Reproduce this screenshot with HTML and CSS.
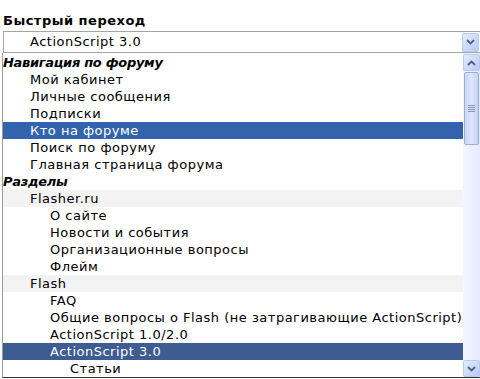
FILE: index.html
```html
<!DOCTYPE html>
<html>
<head>
<meta charset="utf-8">
<link rel="stylesheet" href="styles.css">
</head>
<body>
<div class="page">
  <div class="title">Быстрый переход</div>
  <div class="select">
    <span class="select-text">ActionScript 3.0</span>
    <span class="btn btn-down"><svg width="9" height="6" viewBox="0 0 9 6"><path d="M1 1 L4.5 4.5 L8 1" fill="none" stroke="#4d6185" stroke-width="1.8"/></svg></span>
  </div>
  <div class="list">
    <div class="options">
      <div class="opt cat">Навигация по форуму</div>
      <div class="opt l1">Мой кабинет</div>
      <div class="opt l1">Личные сообщения</div>
      <div class="opt l1">Подписки</div>
      <div class="opt l1 hl">Кто на форуме</div>
      <div class="opt l1">Поиск по форуму</div>
      <div class="opt l1">Главная страница форума</div>
      <div class="opt cat">Разделы</div>
      <div class="opt l1 grey">Flasher.ru</div>
      <div class="opt l2">О сайте</div>
      <div class="opt l2">Новости и события</div>
      <div class="opt l2">Организационные вопросы</div>
      <div class="opt l2">Флейм</div>
      <div class="opt l1 grey">Flash</div>
      <div class="opt l2">FAQ</div>
      <div class="opt l2">Общие вопросы о Flash (не затрагивающие ActionScript)</div>
      <div class="opt l2">ActionScript 1.0/2.0</div>
      <div class="opt l2 sel">ActionScript 3.0</div>
      <div class="opt l3">Статьи</div>
    </div>
    <div class="scroll">
      <span class="btn"><svg width="9" height="6" viewBox="0 0 9 6"><path d="M1 5 L4.5 1.5 L8 5" fill="none" stroke="#4d6185" stroke-width="1.8"/></svg></span>
      <div class="track">
        <div class="thumb"><span class="grip"></span><span class="grip"></span><span class="grip"></span><span class="grip"></span></div>
      </div>
      <span class="btn"><svg width="9" height="6" viewBox="0 0 9 6"><path d="M1 1 L4.5 4.5 L8 1" fill="none" stroke="#4d6185" stroke-width="1.8"/></svg></span>
    </div>
  </div>
</div>
</body>
</html>
```

FILE: styles.css
```css
html, body {
  margin: 0;
  padding: 0;
  background: #ffffff;
}
.page {
  width: 480px;
  height: 379px;
  overflow: hidden;
  font-family: "DejaVu Sans", Verdana, sans-serif;
  font-size: 13px;
  letter-spacing: 0.5px;
  color: #000;
}
.title {
  font-weight: bold;
  height: 31px;
  line-height: 17px;
  padding: 12px 0 0 3px;
  box-sizing: border-box;
}
.select {
  margin-left: 3px;
  height: 22px;
  box-sizing: border-box;
  border: 1px solid #a5a5a5;
  border-right: none;
  display: flex;
  align-items: center;
  justify-content: space-between;
}
.select-text {
  padding-left: 26px;
  line-height: 20px;
}
.btn {
  width: 17px;
  height: 17px;
  box-sizing: border-box;
  border: 1px solid #b9c9ef;
  border-radius: 2px;
  background: linear-gradient(135deg, #e3ebfd 0%, #c9d8f8 60%, #b7caf5 100%);
  display: flex;
  align-items: center;
  justify-content: center;
}
.btn-down {
  height: 19px;
  margin-right: 1px;
}
.list {
  margin-left: 2px;
  height: 325px;
  box-sizing: border-box;
  border-left: 1px solid #9a9a9a;
  border-bottom: 1px solid #333;
  display: flex;
}
.options {
  flex: 1;
  padding-top: 1px;
}
.opt {
  height: 17px;
  line-height: 17px;
  white-space: nowrap;
}
.cat {
  font-weight: bold;
  font-style: italic;
  letter-spacing: -0.3px;
  padding-left: 0;
}
.l1 { padding-left: 27px; }
.l2 { padding-left: 47px; }
.l3 { padding-left: 67px; }
.grey { background: #f3f3f3; }
.hl { background: #3463ad; color: #fff; }
.sel { background: #3e5c92; color: #fff; }
.scroll {
  width: 17px;
  display: flex;
  flex-direction: column;
  padding-top: 1px;
  background: linear-gradient(90deg, #f2f6fe, #e4ecfc);
}
.track {
  flex: 1;
  padding: 0 0 0 1px;
}
.thumb {
  margin-top: 1px;
  width: 15px;
  height: 73px;
  box-sizing: border-box;
  border: 1px solid #9aaed8;
  border-radius: 2px;
  background: linear-gradient(90deg, #c7d7fb, #dce7fe 50%, #c2d3f9);
  display: flex;
  flex-direction: column;
  align-items: center;
  justify-content: center;
  gap: 1px;
}
.grip {
  width: 7px;
  height: 1px;
  background: #8796b8;
}
```
